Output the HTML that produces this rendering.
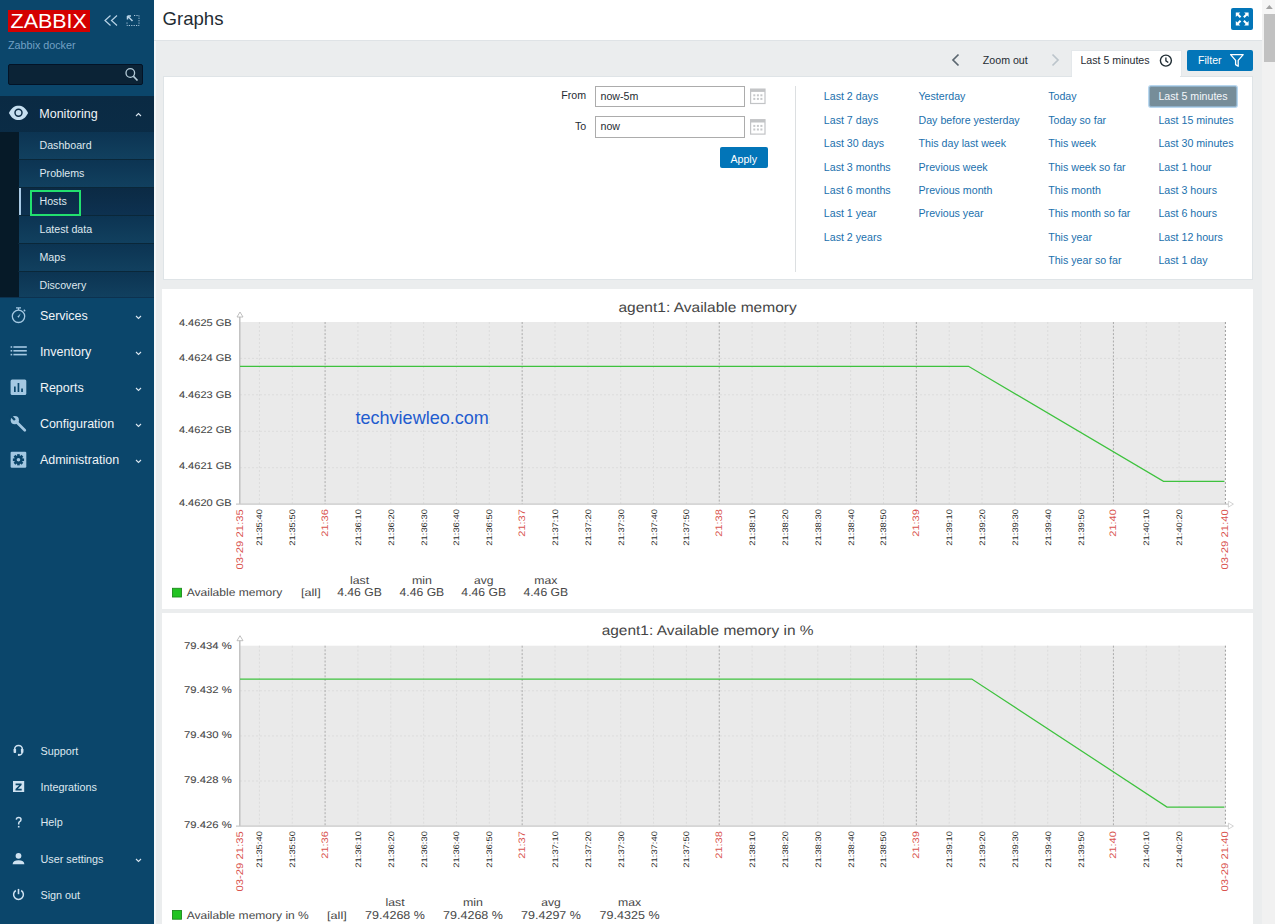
<!DOCTYPE html>
<html><head><meta charset="utf-8">
<style>
*{box-sizing:border-box;margin:0;padding:0}
html,body{width:1275px;height:924px;overflow:hidden;background:#ebedee;font-family:"Liberation Sans",sans-serif;color:#1f2c33}
.abs{position:absolute}
#sb{position:absolute;left:0;top:0;width:154px;height:924px;background:#0b466b}
.t{position:absolute;white-space:nowrap;line-height:1}
.mi{font-size:12.5px;color:#f0f4f7}
.si{font-size:10.65px;color:#dfe8ef}
.bi{font-size:10.8px;color:#dfe8ef}
.lnk{font-size:10.65px;color:#1a70ad}
.si-bg{left:18.5px;width:135.5px;height:26.8px;background:linear-gradient(#0c3452,#11405f)}
.sep{position:absolute;left:18px;width:136px;height:1.4px;background:#0a2739}
</style></head>
<body>
<div id="sb">
  <!-- logo -->
  <div class="abs" style="left:8px;top:10px;width:82px;height:22px;background:#d40000"></div>
  <svg class="abs" style="left:0;top:0" width="154" height="60">
    <text x="10.6" y="28.2" font-size="21" fill="#fff" textLength="76.2" lengthAdjust="spacingAndGlyphs" font-family="Liberation Sans">ZABBIX</text>
    <path d="M110.5,15.5 L105,20.5 L110.5,25.5 M117,15.5 L111.5,20.5 L117,25.5" fill="none" stroke="#b9d3e6" stroke-width="1.2"/>
    <path d="M127.5,16 L131,16 M127.5,16 L127.5,19.5 M127.8,16.3 L132.5,21" stroke="#b9d3e6" stroke-width="1.5" fill="none"/>
    <path d="M134,15.5 H139 V25.5 H127 V21.5" stroke="#b9d3e6" stroke-width="0.9" fill="none" stroke-dasharray="1.2,1.2"/>
  </svg>
  <div class="t" style="left:8px;top:40.2px;font-size:10.75px;color:#72a0c4">Zabbix docker</div>
  <!-- search -->
  <div class="abs" style="left:8px;top:64px;width:135px;height:20.5px;background:#0b2336;border:1px solid #031326;border-radius:2px"></div>
  <svg class="abs" style="left:123px;top:66px" width="18" height="18">
    <circle cx="7.3" cy="7" r="4.3" fill="none" stroke="#b4cbd8" stroke-width="1.3"/>
    <path d="M10.3,10.1 L14.5,14.5" stroke="#b4cbd8" stroke-width="1.6"/>
  </svg>
  <!-- monitoring expanded -->
  <div class="abs" style="left:0;top:96px;width:154px;height:201.5px;background:linear-gradient(#0a2a43,#0c3250)"></div>
  <div class="abs" style="left:0;top:131.8px;width:18.5px;height:165.7px;background:#061a28"></div>
  <div class="abs" style="left:18.5px;top:131.8px;width:135.5px;height:165.7px;background:#0f3a58"></div>
  <div class="abs si-bg" style="top:131.8px"></div><div class="abs si-bg" style="top:160.4px"></div><div class="abs si-bg" style="top:188.35px;background:linear-gradient(#0b2a44,#0d3150)"></div><div class="abs si-bg" style="top:216.3px"></div><div class="abs si-bg" style="top:244.25px"></div><div class="abs si-bg" style="top:272.2px;height:25.3px"></div>
  <div class="sep" style="top:159px"></div>
  <div class="sep" style="top:186.95px"></div>
  <div class="sep" style="top:214.9px"></div>
  <div class="sep" style="top:242.85px"></div>
  <div class="sep" style="top:270.8px"></div>
  <div class="abs" style="left:19px;top:188.3px;width:2px;height:26.5px;background:#a9cbe6"></div>
  <div class="abs" style="left:29.8px;top:190px;width:51.4px;height:26px;border:2px solid #22e06e"></div>
  <svg class="abs" style="left:0;top:96px" width="154" height="36">
    <path d="M8.9,16.9 C11.8,11.6 14.8,9.8 18.5,9.8 C22.2,9.8 25.2,11.6 28.1,16.9 C25.2,22.3 22.2,24.1 18.5,24.1 C14.8,24.1 11.8,22.3 8.9,16.9 Z" fill="#c6dff0"/>
    <circle cx="18.5" cy="16.8" r="3.5" fill="none" stroke="#0b2a43" stroke-width="1.45"/>
    <path d="M136,20 L138.5,17.5 L141,20" fill="none" stroke="#d8e5ef" stroke-width="1.1"/>
  </svg>
  <div class="t mi" style="left:39.3px;top:108.2px">Monitoring</div>
  <div class="t si" style="left:39.5px;top:140px">Dashboard</div>
  <div class="t si" style="left:39.5px;top:167.8px">Problems</div>
  <div class="t si" style="left:39.5px;top:195.6px">Hosts</div>
  <div class="t si" style="left:39.5px;top:224.4px">Latest data</div>
  <div class="t si" style="left:39.5px;top:252.4px">Maps</div>
  <div class="t si" style="left:39.5px;top:280.2px">Discovery</div>
  <!-- main menu -->
  <div class="t mi" style="left:39.9px;top:309.8px">Services</div>
  <div class="t mi" style="left:39.9px;top:345.8px">Inventory</div>
  <div class="t mi" style="left:39.9px;top:381.8px">Reports</div>
  <div class="t mi" style="left:39.9px;top:417.8px">Configuration</div>
  <div class="t mi" style="left:39.9px;top:453.8px">Administration</div>
  <svg class="abs" style="left:0;top:297px" width="154" height="180">
    <!-- chevrons -->
    <path d="M136,19 L138.5,21.5 L141,19 M136,55 L138.5,57.5 L141,55 M136,91 L138.5,93.5 L141,91 M136,127 L138.5,129.5 L141,127 M136,163 L138.5,165.5 L141,163" fill="none" stroke="#d8e5ef" stroke-width="1.1"/>
    <!-- services stopwatch -->
    <g fill="none" stroke="#a4c8e2" stroke-width="1.3">
      <circle cx="18.5" cy="19.3" r="6.2"/>
      <path d="M16,10.8 H21 M18.5,10.8 V13 M23.8,12.8 L25.2,14.2"/>
    </g>
    <path d="M20.8,16.3 L17.3,19.8 L18.8,20.8 Z" fill="#a4c8e2"/>
    <!-- inventory -->
    <g fill="#a4c8e2">
      <rect x="10.6" y="49.2" width="1.6" height="1.6"/><rect x="10.6" y="53" width="1.6" height="1.6"/><rect x="10.6" y="56.8" width="1.6" height="1.6"/>
      <rect x="13.4" y="49.2" width="13.4" height="1.6"/><rect x="13.4" y="53" width="13.4" height="1.6"/><rect x="13.4" y="56.8" width="13.4" height="1.6"/>
    </g>
    <!-- reports -->
    <rect x="10.6" y="82.5" width="15.7" height="15.5" rx="1.5" fill="#a4c8e2"/>
    <g fill="#0b466b"><rect x="14" y="89.5" width="1.7" height="5.5"/><rect x="17.6" y="86" width="1.7" height="9"/><rect x="21.2" y="91.5" width="1.7" height="3.5"/></g>
    <!-- configuration wrench -->
    <circle cx="14.8" cy="123.2" r="4.1" fill="#a4c8e2"/>
    <path d="M15.5,124 L24.8,133.2" stroke="#a4c8e2" stroke-width="2.7" stroke-linecap="round"/>
    <path d="M14.9,123 L10.3,118.4" stroke="#0b466b" stroke-width="2.4"/>
    <!-- administration gear -->
    <rect x="10.6" y="154.8" width="15.7" height="15.9" rx="1.2" fill="#a4c8e2"/>
    <g transform="translate(18.45,162.75)">
      <circle r="4.2" fill="#0b466b"/>
      <g fill="#0b466b"><rect x="-1.3" y="-5.6" width="2.6" height="11.2"/><rect x="-1.3" y="-5.6" width="2.6" height="11.2" transform="rotate(45)"/><rect x="-1.3" y="-5.6" width="2.6" height="11.2" transform="rotate(90)"/><rect x="-1.3" y="-5.6" width="2.6" height="11.2" transform="rotate(135)"/></g>
      <circle r="1.8" fill="#a4c8e2"/>
    </g>
  </svg>
  <!-- bottom menu -->
  <div class="t bi" style="left:40.5px;top:746px">Support</div>
  <div class="t bi" style="left:40.5px;top:781.8px">Integrations</div>
  <div class="t bi" style="left:40.5px;top:817.4px">Help</div>
  <div class="t bi" style="left:40.5px;top:854px">User settings</div>
  <div class="t bi" style="left:40.5px;top:890px">Sign out</div>
  <svg class="abs" style="left:0;top:730px" width="154" height="194">
    <!-- support headset -->
    <path d="M14.6,21.5 V19.4 A3.9,3.9 0 0 1 22.4,19.4 V21.5" fill="none" stroke="#cfe2f1" stroke-width="1.5"/>
    <rect x="13.6" y="18.8" width="2.5" height="4.3" rx="0.8" fill="#cfe2f1"/><rect x="20.9" y="18.8" width="2.5" height="4.3" rx="0.8" fill="#cfe2f1"/>
    <path d="M22.2,22.6 Q21.9,24.9 19.4,24.9" fill="none" stroke="#cfe2f1" stroke-width="1.2"/>
    <circle cx="18.9" cy="24.9" r="1.1" fill="#cfe2f1"/>
    <!-- integrations -->
    <rect x="13" y="51" width="11.2" height="11" fill="#cfe2f1"/>
    <path d="M15.6,53.4 H21.6 V55 L17.9,58.8 H21.7 V60.6 H15.5 V59 L19.2,55.2 H15.6 Z" fill="#0b466b"/>
    <!-- help -->
    <path d="M16.3,89.6 Q16.4,87.4 18.7,87.4 Q21,87.4 21,89.4 Q21,90.8 19.6,91.7 Q18.7,92.3 18.7,93.6 V94.4" fill="none" stroke="#cfe2f1" stroke-width="1.5"/><rect x="17.9" y="95.9" width="1.6" height="1.6" fill="#cfe2f1"/>
    <!-- user -->
    <circle cx="18.5" cy="125.8" r="2.9" fill="#cfe2f1"/>
    <path d="M12.6,134.2 Q12.8,130.3 18.5,130.3 Q24.2,130.3 24.4,134.2 Z" fill="#cfe2f1"/>
    <path d="M136,129 L138.5,131.5 L141,129" fill="none" stroke="#d8e5ef" stroke-width="1.1"/>
    <!-- sign out -->
    <path d="M15.8,160.5 A4.9,4.9 0 1 0 21.2,160.5" fill="none" stroke="#cfe2f1" stroke-width="1.5"/>
    <path d="M18.5,158.9 V164.2" stroke="#cfe2f1" stroke-width="1.6"/>
  </svg>
</div>

<!-- header -->
<div class="abs" style="left:154px;top:0;width:1.5px;height:924px;background:#f6f8f9"></div>
<div class="abs" style="left:154px;top:0;width:1108px;height:40px;background:#fff"></div>
<div class="abs" style="left:154px;top:40px;width:1108px;height:1px;background:#dfe3e6"></div>
<div class="t" style="left:162.5px;top:10px;font-size:18.6px;color:#1f2c33">Graphs</div>
<div class="abs" style="left:1231.3px;top:8px;width:21.4px;height:22px;background:#0275b8;border-radius:2px"></div>
<svg class="abs" style="left:1225px;top:0" width="37" height="40">
  <g fill="#fff">
    <path d="M10.8,12.6 H15.3 L13.8,14.1 L16.3,16.6 L14.8,18.1 L12.3,15.6 L10.8,17.1 Z"/>
    <path d="M23.6,12.6 H19.1 L20.6,14.1 L18.1,16.6 L19.6,18.1 L22.1,15.6 L23.6,17.1 Z"/>
    <path d="M10.8,25.5 H15.3 L13.8,24 L16.3,21.5 L14.8,20 L12.3,22.5 L10.8,21 Z"/>
    <path d="M23.6,25.5 H19.1 L20.6,24 L18.1,21.5 L19.6,20 L22.1,22.5 L23.6,21 Z"/>
  </g>
</svg>

<!-- tabs -->
<svg class="abs" style="left:940px;top:40px" width="125" height="36">
  <path d="M18.5,14.5 L13,20 L18.5,25.5" fill="none" stroke="#5b6770" stroke-width="1.7"/>
  <path d="M112.5,14.5 L118,20 L112.5,25.5" fill="none" stroke="#bcc5cb" stroke-width="1.7"/>
</svg>
<div class="t" style="left:982.8px;top:55px;font-size:10.65px;color:#1f2c33">Zoom out</div>
<div class="abs" style="left:1071px;top:50.2px;width:111px;height:27px;background:#fff;border:1px solid #e4e8eb;border-bottom:none"></div>
<div class="t" style="left:1080.4px;top:55.1px;font-size:10.65px;color:#1f2c33">Last 5 minutes</div>
<svg class="abs" style="left:1158px;top:53px" width="16" height="16">
  <circle cx="7.9" cy="7.6" r="5.5" fill="none" stroke="#1f2c33" stroke-width="1.4"/>
  <path d="M7.9,4.5 V7.8 L10.3,9.6" fill="none" stroke="#1f2c33" stroke-width="1.3"/>
</svg>
<div class="abs" style="left:1187px;top:50.2px;width:66px;height:20.4px;background:#0275b8;border-radius:2px"></div>
<div class="t" style="left:1198px;top:55.1px;font-size:10.65px;color:#fff">Filter</div>
<svg class="abs" style="left:1228px;top:52px" width="18" height="18">
  <path d="M2.6,2.6 H15.2 L10.2,8.4 V14.3 L7.6,12.6 V8.4 Z" fill="none" stroke="#fff" stroke-width="1.3" stroke-linejoin="round"/>
</svg>

<!-- filter box -->
<div class="abs" style="left:162.5px;top:76.4px;width:1090px;height:204px;background:#fff;border:1px solid #dfe4e7"></div>
<div class="abs" style="left:1072px;top:76px;width:108px;height:2px;background:#fff"></div>
<div class="t" style="left:561.2px;top:90.3px;font-size:10.65px;color:#1f2c33">From</div>
<div class="t" style="left:574.9px;top:121px;font-size:10.65px;color:#1f2c33">To</div>
<div class="abs" style="left:595.1px;top:86.3px;width:149.7px;height:20.4px;border:1px solid #acacac;background:#fff"></div>
<div class="abs" style="left:595.1px;top:116.4px;width:149.7px;height:21.3px;border:1px solid #acacac;background:#fff"></div>
<div class="t" style="left:600.5px;top:91.1px;font-size:10.65px;color:#1f2c33">now-5m</div>
<div class="t" style="left:600.5px;top:121.4px;font-size:10.65px;color:#1f2c33">now</div>
<svg class="abs" style="left:748px;top:86px" width="20" height="52">
  <g>
    <rect x="2.6" y="3.1" width="14.4" height="14.4" fill="none" stroke="#c2c4c6" stroke-width="1.2"/>
    <rect x="2.6" y="3.1" width="14.4" height="2.8" fill="#c2c4c6"/>
    <g fill="#c6c8ca"><rect x="5.3" y="8.3" width="2" height="2"/><rect x="8.9" y="8.3" width="2" height="2"/><rect x="12.4" y="8.3" width="2" height="2"/><rect x="5.3" y="11.9" width="2" height="2"/><rect x="8.9" y="11.9" width="2" height="2"/><rect x="12.4" y="11.9" width="2" height="2"/></g>
  </g>
  <g transform="translate(0,30.6)">
    <rect x="2.6" y="3.1" width="14.4" height="14.4" fill="none" stroke="#c2c4c6" stroke-width="1.2"/>
    <rect x="2.6" y="3.1" width="14.4" height="2.8" fill="#c2c4c6"/>
    <g fill="#c6c8ca"><rect x="5.3" y="8.3" width="2" height="2"/><rect x="8.9" y="8.3" width="2" height="2"/><rect x="12.4" y="8.3" width="2" height="2"/><rect x="5.3" y="11.9" width="2" height="2"/><rect x="8.9" y="11.9" width="2" height="2"/><rect x="12.4" y="11.9" width="2" height="2"/></g>
  </g>
</svg>
<div class="abs" style="left:720px;top:147.1px;width:48px;height:21px;background:#0275b8;border-radius:2px"></div>
<div class="t" style="left:730.4px;top:154px;font-size:10.65px;color:#fff">Apply</div>
<div class="abs" style="left:795px;top:85.7px;width:1px;height:186px;background:#dcdfe1"></div>

<div class="t lnk" style="left:823.8px;top:91.3px">Last 2 days</div>
<div class="t lnk" style="left:823.8px;top:114.7px">Last 7 days</div>
<div class="t lnk" style="left:823.8px;top:138.1px">Last 30 days</div>
<div class="t lnk" style="left:823.8px;top:161.5px">Last 3 months</div>
<div class="t lnk" style="left:823.8px;top:184.9px">Last 6 months</div>
<div class="t lnk" style="left:823.8px;top:208.3px">Last 1 year</div>
<div class="t lnk" style="left:823.8px;top:231.7px">Last 2 years</div>

<div class="t lnk" style="left:918.5px;top:91.3px">Yesterday</div>
<div class="t lnk" style="left:918.5px;top:114.7px">Day before yesterday</div>
<div class="t lnk" style="left:918.5px;top:138.1px">This day last week</div>
<div class="t lnk" style="left:918.5px;top:161.5px">Previous week</div>
<div class="t lnk" style="left:918.5px;top:184.9px">Previous month</div>
<div class="t lnk" style="left:918.5px;top:208.3px">Previous year</div>

<div class="t lnk" style="left:1048.2px;top:91.3px">Today</div>
<div class="t lnk" style="left:1048.2px;top:114.7px">Today so far</div>
<div class="t lnk" style="left:1048.2px;top:138.1px">This week</div>
<div class="t lnk" style="left:1048.2px;top:161.5px">This week so far</div>
<div class="t lnk" style="left:1048.2px;top:184.9px">This month</div>
<div class="t lnk" style="left:1048.2px;top:208.3px">This month so far</div>
<div class="t lnk" style="left:1048.2px;top:231.7px">This year</div>
<div class="t lnk" style="left:1048.2px;top:255.1px">This year so far</div>

<div class="abs" style="left:1148.7px;top:86px;width:88.2px;height:20.7px;background:#768d99;border:1px solid #8fb0c8;box-shadow:0 0 0 1px #b9d7ee;border-radius:2px"></div>
<div class="t lnk" style="left:1158.4px;top:91.3px;color:#f4f7f9">Last 5 minutes</div>
<div class="t lnk" style="left:1158.4px;top:114.7px">Last 15 minutes</div>
<div class="t lnk" style="left:1158.4px;top:138.1px">Last 30 minutes</div>
<div class="t lnk" style="left:1158.4px;top:161.5px">Last 1 hour</div>
<div class="t lnk" style="left:1158.4px;top:184.9px">Last 3 hours</div>
<div class="t lnk" style="left:1158.4px;top:208.3px">Last 6 hours</div>
<div class="t lnk" style="left:1158.4px;top:231.7px">Last 12 hours</div>
<div class="t lnk" style="left:1158.4px;top:255.1px">Last 1 day</div>

<!-- graph containers -->
<div class="abs" style="left:162px;top:289.4px;width:1090.8px;height:319.5px;background:#fff"></div>
<div class="abs" style="left:162px;top:612.8px;width:1090.8px;height:320px;background:#fff"></div>
<svg class="gsvg" width="1275" height="924" viewBox="0 0 1275 924" style="position:absolute;left:0;top:0;font-family:'Liberation Sans',sans-serif;text-rendering:geometricPrecision">
<text x="707.60" y="312.00" font-size="13.88" fill="#454545" text-anchor="middle" textLength="178.23" lengthAdjust="spacingAndGlyphs">agent1: Available memory</text>
<rect x="240.0" y="322.0" width="985.4000000000001" height="182.10000000000002" fill="#eaeaea"/>
<line x1="240.0" y1="358.42" x2="1225.4" y2="358.42" stroke="#dcdcdc" stroke-width="1" stroke-dasharray="2,2"/>
<line x1="240.0" y1="394.84" x2="1225.4" y2="394.84" stroke="#dcdcdc" stroke-width="1" stroke-dasharray="2,2"/>
<line x1="240.0" y1="431.26" x2="1225.4" y2="431.26" stroke="#dcdcdc" stroke-width="1" stroke-dasharray="2,2"/>
<line x1="240.0" y1="467.68" x2="1225.4" y2="467.68" stroke="#dcdcdc" stroke-width="1" stroke-dasharray="2,2"/>
<line x1="259.40" y1="322.0" x2="259.40" y2="504.1" stroke="#dcdcdc" stroke-width="1" stroke-dasharray="2,2"/>
<line x1="292.25" y1="322.0" x2="292.25" y2="504.1" stroke="#dcdcdc" stroke-width="1" stroke-dasharray="2,2"/>
<line x1="325.09" y1="322.0" x2="325.09" y2="504.1" stroke="#ababab" stroke-width="1" stroke-dasharray="2,1.7"/>
<line x1="357.94" y1="322.0" x2="357.94" y2="504.1" stroke="#dcdcdc" stroke-width="1" stroke-dasharray="2,2"/>
<line x1="390.79" y1="322.0" x2="390.79" y2="504.1" stroke="#dcdcdc" stroke-width="1" stroke-dasharray="2,2"/>
<line x1="423.63" y1="322.0" x2="423.63" y2="504.1" stroke="#dcdcdc" stroke-width="1" stroke-dasharray="2,2"/>
<line x1="456.48" y1="322.0" x2="456.48" y2="504.1" stroke="#dcdcdc" stroke-width="1" stroke-dasharray="2,2"/>
<line x1="489.33" y1="322.0" x2="489.33" y2="504.1" stroke="#dcdcdc" stroke-width="1" stroke-dasharray="2,2"/>
<line x1="522.17" y1="322.0" x2="522.17" y2="504.1" stroke="#ababab" stroke-width="1" stroke-dasharray="2,1.7"/>
<line x1="555.02" y1="322.0" x2="555.02" y2="504.1" stroke="#dcdcdc" stroke-width="1" stroke-dasharray="2,2"/>
<line x1="587.87" y1="322.0" x2="587.87" y2="504.1" stroke="#dcdcdc" stroke-width="1" stroke-dasharray="2,2"/>
<line x1="620.71" y1="322.0" x2="620.71" y2="504.1" stroke="#dcdcdc" stroke-width="1" stroke-dasharray="2,2"/>
<line x1="653.56" y1="322.0" x2="653.56" y2="504.1" stroke="#dcdcdc" stroke-width="1" stroke-dasharray="2,2"/>
<line x1="686.41" y1="322.0" x2="686.41" y2="504.1" stroke="#dcdcdc" stroke-width="1" stroke-dasharray="2,2"/>
<line x1="719.25" y1="322.0" x2="719.25" y2="504.1" stroke="#ababab" stroke-width="1" stroke-dasharray="2,1.7"/>
<line x1="752.10" y1="322.0" x2="752.10" y2="504.1" stroke="#dcdcdc" stroke-width="1" stroke-dasharray="2,2"/>
<line x1="784.95" y1="322.0" x2="784.95" y2="504.1" stroke="#dcdcdc" stroke-width="1" stroke-dasharray="2,2"/>
<line x1="817.79" y1="322.0" x2="817.79" y2="504.1" stroke="#dcdcdc" stroke-width="1" stroke-dasharray="2,2"/>
<line x1="850.64" y1="322.0" x2="850.64" y2="504.1" stroke="#dcdcdc" stroke-width="1" stroke-dasharray="2,2"/>
<line x1="883.49" y1="322.0" x2="883.49" y2="504.1" stroke="#dcdcdc" stroke-width="1" stroke-dasharray="2,2"/>
<line x1="916.33" y1="322.0" x2="916.33" y2="504.1" stroke="#ababab" stroke-width="1" stroke-dasharray="2,1.7"/>
<line x1="949.18" y1="322.0" x2="949.18" y2="504.1" stroke="#dcdcdc" stroke-width="1" stroke-dasharray="2,2"/>
<line x1="982.03" y1="322.0" x2="982.03" y2="504.1" stroke="#dcdcdc" stroke-width="1" stroke-dasharray="2,2"/>
<line x1="1014.87" y1="322.0" x2="1014.87" y2="504.1" stroke="#dcdcdc" stroke-width="1" stroke-dasharray="2,2"/>
<line x1="1047.72" y1="322.0" x2="1047.72" y2="504.1" stroke="#dcdcdc" stroke-width="1" stroke-dasharray="2,2"/>
<line x1="1080.57" y1="322.0" x2="1080.57" y2="504.1" stroke="#dcdcdc" stroke-width="1" stroke-dasharray="2,2"/>
<line x1="1113.41" y1="322.0" x2="1113.41" y2="504.1" stroke="#ababab" stroke-width="1" stroke-dasharray="2,1.7"/>
<line x1="1146.26" y1="322.0" x2="1146.26" y2="504.1" stroke="#dcdcdc" stroke-width="1" stroke-dasharray="2,2"/>
<line x1="1179.11" y1="322.0" x2="1179.11" y2="504.1" stroke="#dcdcdc" stroke-width="1" stroke-dasharray="2,2"/>
<line x1="1225.4" y1="322.0" x2="1225.4" y2="504.1" stroke="#9a9a9a" stroke-width="1" stroke-dasharray="2,2"/>
<line x1="239.8" y1="314.0" x2="239.8" y2="504.1" stroke="#bdbdbd" stroke-width="1.4"/>
<line x1="236.0" y1="504.1" x2="1229.4" y2="504.1" stroke="#c8c8c8" stroke-width="1.2"/>
<path d="M237.0,317.0 L240.0,312.0 L243.0,317.0 Z" fill="#fff" stroke="#b0b0b0" stroke-width="0.8"/>
<path d="M1228.4,501.1 L1233.4,504.1 L1228.4,507.1 Z" fill="#fff" stroke="#c8c8c8" stroke-width="0.8"/>
<text x="231.70" y="326.00" font-size="9.70" fill="#444444" stroke="#444444" stroke-width="0.08" text-anchor="end" textLength="52.78" lengthAdjust="spacingAndGlyphs">4.4625 GB</text>
<text x="231.70" y="361.30" font-size="9.70" fill="#444444" stroke="#444444" stroke-width="0.08" text-anchor="end" textLength="52.78" lengthAdjust="spacingAndGlyphs">4.4624 GB</text>
<text x="231.70" y="397.90" font-size="9.70" fill="#444444" stroke="#444444" stroke-width="0.08" text-anchor="end" textLength="52.78" lengthAdjust="spacingAndGlyphs">4.4623 GB</text>
<text x="231.70" y="433.20" font-size="9.70" fill="#444444" stroke="#444444" stroke-width="0.08" text-anchor="end" textLength="52.78" lengthAdjust="spacingAndGlyphs">4.4622 GB</text>
<text x="231.70" y="469.30" font-size="9.70" fill="#444444" stroke="#444444" stroke-width="0.08" text-anchor="end" textLength="52.78" lengthAdjust="spacingAndGlyphs">4.4621 GB</text>
<text x="231.70" y="505.70" font-size="9.70" fill="#444444" stroke="#444444" stroke-width="0.08" text-anchor="end" textLength="52.78" lengthAdjust="spacingAndGlyphs">4.4620 GB</text>
<polyline points="240.0,366.3 968.5,366.3 1163.5,481.3 1224.4,481.3" fill="none" stroke="#3ec23e" stroke-width="1.25"/>
<text transform="translate(243.00,509.1) rotate(-90)" x="0" y="0" font-size="9.59" fill="#d9534f" text-anchor="end" textLength="60.44" lengthAdjust="spacingAndGlyphs">03-29 21:35</text>
<text transform="translate(1228.40,509.1) rotate(-90)" x="0" y="0" font-size="9.59" fill="#d9534f" text-anchor="end" textLength="60.44" lengthAdjust="spacingAndGlyphs">03-29 21:40</text>
<text transform="translate(262.40,509.1) rotate(-90)" x="0" y="0" font-size="8.01" fill="#2e2e2e" text-anchor="end" textLength="36.60" lengthAdjust="spacingAndGlyphs">21:35:40</text>
<text transform="translate(295.25,509.1) rotate(-90)" x="0" y="0" font-size="8.01" fill="#2e2e2e" text-anchor="end" textLength="36.60" lengthAdjust="spacingAndGlyphs">21:35:50</text>
<text transform="translate(328.09,509.1) rotate(-90)" x="0" y="0" font-size="9.31" fill="#d9534f" text-anchor="end" textLength="27.67" lengthAdjust="spacingAndGlyphs">21:36</text>
<text transform="translate(360.94,509.1) rotate(-90)" x="0" y="0" font-size="8.01" fill="#2e2e2e" text-anchor="end" textLength="36.60" lengthAdjust="spacingAndGlyphs">21:36:10</text>
<text transform="translate(393.79,509.1) rotate(-90)" x="0" y="0" font-size="8.01" fill="#2e2e2e" text-anchor="end" textLength="36.60" lengthAdjust="spacingAndGlyphs">21:36:20</text>
<text transform="translate(426.63,509.1) rotate(-90)" x="0" y="0" font-size="8.01" fill="#2e2e2e" text-anchor="end" textLength="36.60" lengthAdjust="spacingAndGlyphs">21:36:30</text>
<text transform="translate(459.48,509.1) rotate(-90)" x="0" y="0" font-size="8.01" fill="#2e2e2e" text-anchor="end" textLength="36.60" lengthAdjust="spacingAndGlyphs">21:36:40</text>
<text transform="translate(492.33,509.1) rotate(-90)" x="0" y="0" font-size="8.01" fill="#2e2e2e" text-anchor="end" textLength="36.60" lengthAdjust="spacingAndGlyphs">21:36:50</text>
<text transform="translate(525.17,509.1) rotate(-90)" x="0" y="0" font-size="9.31" fill="#d9534f" text-anchor="end" textLength="27.67" lengthAdjust="spacingAndGlyphs">21:37</text>
<text transform="translate(558.02,509.1) rotate(-90)" x="0" y="0" font-size="8.01" fill="#2e2e2e" text-anchor="end" textLength="36.60" lengthAdjust="spacingAndGlyphs">21:37:10</text>
<text transform="translate(590.87,509.1) rotate(-90)" x="0" y="0" font-size="8.01" fill="#2e2e2e" text-anchor="end" textLength="36.60" lengthAdjust="spacingAndGlyphs">21:37:20</text>
<text transform="translate(623.71,509.1) rotate(-90)" x="0" y="0" font-size="8.01" fill="#2e2e2e" text-anchor="end" textLength="36.60" lengthAdjust="spacingAndGlyphs">21:37:30</text>
<text transform="translate(656.56,509.1) rotate(-90)" x="0" y="0" font-size="8.01" fill="#2e2e2e" text-anchor="end" textLength="36.60" lengthAdjust="spacingAndGlyphs">21:37:40</text>
<text transform="translate(689.41,509.1) rotate(-90)" x="0" y="0" font-size="8.01" fill="#2e2e2e" text-anchor="end" textLength="36.60" lengthAdjust="spacingAndGlyphs">21:37:50</text>
<text transform="translate(722.25,509.1) rotate(-90)" x="0" y="0" font-size="9.31" fill="#d9534f" text-anchor="end" textLength="27.67" lengthAdjust="spacingAndGlyphs">21:38</text>
<text transform="translate(755.10,509.1) rotate(-90)" x="0" y="0" font-size="8.01" fill="#2e2e2e" text-anchor="end" textLength="36.60" lengthAdjust="spacingAndGlyphs">21:38:10</text>
<text transform="translate(787.95,509.1) rotate(-90)" x="0" y="0" font-size="8.01" fill="#2e2e2e" text-anchor="end" textLength="36.60" lengthAdjust="spacingAndGlyphs">21:38:20</text>
<text transform="translate(820.79,509.1) rotate(-90)" x="0" y="0" font-size="8.01" fill="#2e2e2e" text-anchor="end" textLength="36.60" lengthAdjust="spacingAndGlyphs">21:38:30</text>
<text transform="translate(853.64,509.1) rotate(-90)" x="0" y="0" font-size="8.01" fill="#2e2e2e" text-anchor="end" textLength="36.60" lengthAdjust="spacingAndGlyphs">21:38:40</text>
<text transform="translate(886.49,509.1) rotate(-90)" x="0" y="0" font-size="8.01" fill="#2e2e2e" text-anchor="end" textLength="36.60" lengthAdjust="spacingAndGlyphs">21:38:50</text>
<text transform="translate(919.33,509.1) rotate(-90)" x="0" y="0" font-size="9.31" fill="#d9534f" text-anchor="end" textLength="27.67" lengthAdjust="spacingAndGlyphs">21:39</text>
<text transform="translate(952.18,509.1) rotate(-90)" x="0" y="0" font-size="8.01" fill="#2e2e2e" text-anchor="end" textLength="36.60" lengthAdjust="spacingAndGlyphs">21:39:10</text>
<text transform="translate(985.03,509.1) rotate(-90)" x="0" y="0" font-size="8.01" fill="#2e2e2e" text-anchor="end" textLength="36.60" lengthAdjust="spacingAndGlyphs">21:39:20</text>
<text transform="translate(1017.87,509.1) rotate(-90)" x="0" y="0" font-size="8.01" fill="#2e2e2e" text-anchor="end" textLength="36.60" lengthAdjust="spacingAndGlyphs">21:39:30</text>
<text transform="translate(1050.72,509.1) rotate(-90)" x="0" y="0" font-size="8.01" fill="#2e2e2e" text-anchor="end" textLength="36.60" lengthAdjust="spacingAndGlyphs">21:39:40</text>
<text transform="translate(1083.57,509.1) rotate(-90)" x="0" y="0" font-size="8.01" fill="#2e2e2e" text-anchor="end" textLength="36.60" lengthAdjust="spacingAndGlyphs">21:39:50</text>
<text transform="translate(1116.41,509.1) rotate(-90)" x="0" y="0" font-size="9.31" fill="#d9534f" text-anchor="end" textLength="27.67" lengthAdjust="spacingAndGlyphs">21:40</text>
<text transform="translate(1149.26,509.1) rotate(-90)" x="0" y="0" font-size="8.01" fill="#2e2e2e" text-anchor="end" textLength="36.60" lengthAdjust="spacingAndGlyphs">21:40:10</text>
<text transform="translate(1182.11,509.1) rotate(-90)" x="0" y="0" font-size="8.01" fill="#2e2e2e" text-anchor="end" textLength="36.60" lengthAdjust="spacingAndGlyphs">21:40:20</text>
<rect x="172.5" y="588.3" width="9" height="8.7" fill="#22c322" stroke="#1c8a1c" stroke-width="0.9"/>
<text x="186.70" y="596.40" font-size="10.92" fill="#474747" text-anchor="start" textLength="95.64" lengthAdjust="spacingAndGlyphs">Available memory</text>
<text x="300.90" y="596.40" font-size="10.45" fill="#474747" text-anchor="start" textLength="19.78" lengthAdjust="spacingAndGlyphs">[all]</text>
<text x="359.50" y="583.50" font-size="10.92" fill="#474747" text-anchor="middle" textLength="19.12" lengthAdjust="spacingAndGlyphs">last</text>
<text x="359.50" y="596.40" font-size="11.51" fill="#474747" text-anchor="middle" textLength="44.66" lengthAdjust="spacingAndGlyphs">4.46 GB</text>
<text x="421.90" y="583.50" font-size="10.92" fill="#474747" text-anchor="middle" textLength="19.99" lengthAdjust="spacingAndGlyphs">min</text>
<text x="421.90" y="596.40" font-size="11.51" fill="#474747" text-anchor="middle" textLength="44.66" lengthAdjust="spacingAndGlyphs">4.46 GB</text>
<text x="483.70" y="583.50" font-size="10.92" fill="#474747" text-anchor="middle" textLength="19.50" lengthAdjust="spacingAndGlyphs">avg</text>
<text x="483.70" y="596.40" font-size="11.51" fill="#474747" text-anchor="middle" textLength="44.66" lengthAdjust="spacingAndGlyphs">4.46 GB</text>
<text x="545.80" y="583.50" font-size="10.92" fill="#474747" text-anchor="middle" textLength="23.09" lengthAdjust="spacingAndGlyphs">max</text>
<text x="545.80" y="596.40" font-size="11.51" fill="#474747" text-anchor="middle" textLength="44.66" lengthAdjust="spacingAndGlyphs">4.46 GB</text>
<text x="707.60" y="634.90" font-size="13.88" fill="#454545" text-anchor="middle" textLength="211.95" lengthAdjust="spacingAndGlyphs">agent1: Available memory in %</text>
<rect x="240.0" y="645.7" width="985.4000000000001" height="180.39999999999998" fill="#eaeaea"/>
<line x1="240.0" y1="690.80" x2="1225.4" y2="690.80" stroke="#dcdcdc" stroke-width="1" stroke-dasharray="2,2"/>
<line x1="240.0" y1="735.90" x2="1225.4" y2="735.90" stroke="#dcdcdc" stroke-width="1" stroke-dasharray="2,2"/>
<line x1="240.0" y1="781.00" x2="1225.4" y2="781.00" stroke="#dcdcdc" stroke-width="1" stroke-dasharray="2,2"/>
<line x1="259.40" y1="645.7" x2="259.40" y2="826.1" stroke="#dcdcdc" stroke-width="1" stroke-dasharray="2,2"/>
<line x1="292.25" y1="645.7" x2="292.25" y2="826.1" stroke="#dcdcdc" stroke-width="1" stroke-dasharray="2,2"/>
<line x1="325.09" y1="645.7" x2="325.09" y2="826.1" stroke="#ababab" stroke-width="1" stroke-dasharray="2,1.7"/>
<line x1="357.94" y1="645.7" x2="357.94" y2="826.1" stroke="#dcdcdc" stroke-width="1" stroke-dasharray="2,2"/>
<line x1="390.79" y1="645.7" x2="390.79" y2="826.1" stroke="#dcdcdc" stroke-width="1" stroke-dasharray="2,2"/>
<line x1="423.63" y1="645.7" x2="423.63" y2="826.1" stroke="#dcdcdc" stroke-width="1" stroke-dasharray="2,2"/>
<line x1="456.48" y1="645.7" x2="456.48" y2="826.1" stroke="#dcdcdc" stroke-width="1" stroke-dasharray="2,2"/>
<line x1="489.33" y1="645.7" x2="489.33" y2="826.1" stroke="#dcdcdc" stroke-width="1" stroke-dasharray="2,2"/>
<line x1="522.17" y1="645.7" x2="522.17" y2="826.1" stroke="#ababab" stroke-width="1" stroke-dasharray="2,1.7"/>
<line x1="555.02" y1="645.7" x2="555.02" y2="826.1" stroke="#dcdcdc" stroke-width="1" stroke-dasharray="2,2"/>
<line x1="587.87" y1="645.7" x2="587.87" y2="826.1" stroke="#dcdcdc" stroke-width="1" stroke-dasharray="2,2"/>
<line x1="620.71" y1="645.7" x2="620.71" y2="826.1" stroke="#dcdcdc" stroke-width="1" stroke-dasharray="2,2"/>
<line x1="653.56" y1="645.7" x2="653.56" y2="826.1" stroke="#dcdcdc" stroke-width="1" stroke-dasharray="2,2"/>
<line x1="686.41" y1="645.7" x2="686.41" y2="826.1" stroke="#dcdcdc" stroke-width="1" stroke-dasharray="2,2"/>
<line x1="719.25" y1="645.7" x2="719.25" y2="826.1" stroke="#ababab" stroke-width="1" stroke-dasharray="2,1.7"/>
<line x1="752.10" y1="645.7" x2="752.10" y2="826.1" stroke="#dcdcdc" stroke-width="1" stroke-dasharray="2,2"/>
<line x1="784.95" y1="645.7" x2="784.95" y2="826.1" stroke="#dcdcdc" stroke-width="1" stroke-dasharray="2,2"/>
<line x1="817.79" y1="645.7" x2="817.79" y2="826.1" stroke="#dcdcdc" stroke-width="1" stroke-dasharray="2,2"/>
<line x1="850.64" y1="645.7" x2="850.64" y2="826.1" stroke="#dcdcdc" stroke-width="1" stroke-dasharray="2,2"/>
<line x1="883.49" y1="645.7" x2="883.49" y2="826.1" stroke="#dcdcdc" stroke-width="1" stroke-dasharray="2,2"/>
<line x1="916.33" y1="645.7" x2="916.33" y2="826.1" stroke="#ababab" stroke-width="1" stroke-dasharray="2,1.7"/>
<line x1="949.18" y1="645.7" x2="949.18" y2="826.1" stroke="#dcdcdc" stroke-width="1" stroke-dasharray="2,2"/>
<line x1="982.03" y1="645.7" x2="982.03" y2="826.1" stroke="#dcdcdc" stroke-width="1" stroke-dasharray="2,2"/>
<line x1="1014.87" y1="645.7" x2="1014.87" y2="826.1" stroke="#dcdcdc" stroke-width="1" stroke-dasharray="2,2"/>
<line x1="1047.72" y1="645.7" x2="1047.72" y2="826.1" stroke="#dcdcdc" stroke-width="1" stroke-dasharray="2,2"/>
<line x1="1080.57" y1="645.7" x2="1080.57" y2="826.1" stroke="#dcdcdc" stroke-width="1" stroke-dasharray="2,2"/>
<line x1="1113.41" y1="645.7" x2="1113.41" y2="826.1" stroke="#ababab" stroke-width="1" stroke-dasharray="2,1.7"/>
<line x1="1146.26" y1="645.7" x2="1146.26" y2="826.1" stroke="#dcdcdc" stroke-width="1" stroke-dasharray="2,2"/>
<line x1="1179.11" y1="645.7" x2="1179.11" y2="826.1" stroke="#dcdcdc" stroke-width="1" stroke-dasharray="2,2"/>
<line x1="1225.4" y1="645.7" x2="1225.4" y2="826.1" stroke="#9a9a9a" stroke-width="1" stroke-dasharray="2,2"/>
<line x1="239.8" y1="637.7" x2="239.8" y2="826.1" stroke="#bdbdbd" stroke-width="1.4"/>
<line x1="236.0" y1="826.1" x2="1229.4" y2="826.1" stroke="#c8c8c8" stroke-width="1.2"/>
<path d="M237.0,640.7 L240.0,635.7 L243.0,640.7 Z" fill="#fff" stroke="#b0b0b0" stroke-width="0.8"/>
<path d="M1228.4,823.1 L1233.4,826.1 L1228.4,829.1 Z" fill="#fff" stroke="#c8c8c8" stroke-width="0.8"/>
<text x="231.70" y="649.00" font-size="9.70" fill="#444444" stroke="#444444" stroke-width="0.08" text-anchor="end" textLength="47.67" lengthAdjust="spacingAndGlyphs">79.434 %</text>
<text x="231.70" y="693.30" font-size="9.70" fill="#444444" stroke="#444444" stroke-width="0.08" text-anchor="end" textLength="47.67" lengthAdjust="spacingAndGlyphs">79.432 %</text>
<text x="231.70" y="738.00" font-size="9.70" fill="#444444" stroke="#444444" stroke-width="0.08" text-anchor="end" textLength="47.67" lengthAdjust="spacingAndGlyphs">79.430 %</text>
<text x="231.70" y="782.80" font-size="9.70" fill="#444444" stroke="#444444" stroke-width="0.08" text-anchor="end" textLength="47.67" lengthAdjust="spacingAndGlyphs">79.428 %</text>
<text x="231.70" y="827.50" font-size="9.70" fill="#444444" stroke="#444444" stroke-width="0.08" text-anchor="end" textLength="47.67" lengthAdjust="spacingAndGlyphs">79.426 %</text>
<polyline points="240.0,679.0 971.8,679.0 1167.0,807.0 1224.4,807.0" fill="none" stroke="#3ec23e" stroke-width="1.25"/>
<text transform="translate(243.00,831.1) rotate(-90)" x="0" y="0" font-size="9.59" fill="#d9534f" text-anchor="end" textLength="60.44" lengthAdjust="spacingAndGlyphs">03-29 21:35</text>
<text transform="translate(1228.40,831.1) rotate(-90)" x="0" y="0" font-size="9.59" fill="#d9534f" text-anchor="end" textLength="60.44" lengthAdjust="spacingAndGlyphs">03-29 21:40</text>
<text transform="translate(262.40,831.1) rotate(-90)" x="0" y="0" font-size="8.01" fill="#2e2e2e" text-anchor="end" textLength="36.60" lengthAdjust="spacingAndGlyphs">21:35:40</text>
<text transform="translate(295.25,831.1) rotate(-90)" x="0" y="0" font-size="8.01" fill="#2e2e2e" text-anchor="end" textLength="36.60" lengthAdjust="spacingAndGlyphs">21:35:50</text>
<text transform="translate(328.09,831.1) rotate(-90)" x="0" y="0" font-size="9.31" fill="#d9534f" text-anchor="end" textLength="27.67" lengthAdjust="spacingAndGlyphs">21:36</text>
<text transform="translate(360.94,831.1) rotate(-90)" x="0" y="0" font-size="8.01" fill="#2e2e2e" text-anchor="end" textLength="36.60" lengthAdjust="spacingAndGlyphs">21:36:10</text>
<text transform="translate(393.79,831.1) rotate(-90)" x="0" y="0" font-size="8.01" fill="#2e2e2e" text-anchor="end" textLength="36.60" lengthAdjust="spacingAndGlyphs">21:36:20</text>
<text transform="translate(426.63,831.1) rotate(-90)" x="0" y="0" font-size="8.01" fill="#2e2e2e" text-anchor="end" textLength="36.60" lengthAdjust="spacingAndGlyphs">21:36:30</text>
<text transform="translate(459.48,831.1) rotate(-90)" x="0" y="0" font-size="8.01" fill="#2e2e2e" text-anchor="end" textLength="36.60" lengthAdjust="spacingAndGlyphs">21:36:40</text>
<text transform="translate(492.33,831.1) rotate(-90)" x="0" y="0" font-size="8.01" fill="#2e2e2e" text-anchor="end" textLength="36.60" lengthAdjust="spacingAndGlyphs">21:36:50</text>
<text transform="translate(525.17,831.1) rotate(-90)" x="0" y="0" font-size="9.31" fill="#d9534f" text-anchor="end" textLength="27.67" lengthAdjust="spacingAndGlyphs">21:37</text>
<text transform="translate(558.02,831.1) rotate(-90)" x="0" y="0" font-size="8.01" fill="#2e2e2e" text-anchor="end" textLength="36.60" lengthAdjust="spacingAndGlyphs">21:37:10</text>
<text transform="translate(590.87,831.1) rotate(-90)" x="0" y="0" font-size="8.01" fill="#2e2e2e" text-anchor="end" textLength="36.60" lengthAdjust="spacingAndGlyphs">21:37:20</text>
<text transform="translate(623.71,831.1) rotate(-90)" x="0" y="0" font-size="8.01" fill="#2e2e2e" text-anchor="end" textLength="36.60" lengthAdjust="spacingAndGlyphs">21:37:30</text>
<text transform="translate(656.56,831.1) rotate(-90)" x="0" y="0" font-size="8.01" fill="#2e2e2e" text-anchor="end" textLength="36.60" lengthAdjust="spacingAndGlyphs">21:37:40</text>
<text transform="translate(689.41,831.1) rotate(-90)" x="0" y="0" font-size="8.01" fill="#2e2e2e" text-anchor="end" textLength="36.60" lengthAdjust="spacingAndGlyphs">21:37:50</text>
<text transform="translate(722.25,831.1) rotate(-90)" x="0" y="0" font-size="9.31" fill="#d9534f" text-anchor="end" textLength="27.67" lengthAdjust="spacingAndGlyphs">21:38</text>
<text transform="translate(755.10,831.1) rotate(-90)" x="0" y="0" font-size="8.01" fill="#2e2e2e" text-anchor="end" textLength="36.60" lengthAdjust="spacingAndGlyphs">21:38:10</text>
<text transform="translate(787.95,831.1) rotate(-90)" x="0" y="0" font-size="8.01" fill="#2e2e2e" text-anchor="end" textLength="36.60" lengthAdjust="spacingAndGlyphs">21:38:20</text>
<text transform="translate(820.79,831.1) rotate(-90)" x="0" y="0" font-size="8.01" fill="#2e2e2e" text-anchor="end" textLength="36.60" lengthAdjust="spacingAndGlyphs">21:38:30</text>
<text transform="translate(853.64,831.1) rotate(-90)" x="0" y="0" font-size="8.01" fill="#2e2e2e" text-anchor="end" textLength="36.60" lengthAdjust="spacingAndGlyphs">21:38:40</text>
<text transform="translate(886.49,831.1) rotate(-90)" x="0" y="0" font-size="8.01" fill="#2e2e2e" text-anchor="end" textLength="36.60" lengthAdjust="spacingAndGlyphs">21:38:50</text>
<text transform="translate(919.33,831.1) rotate(-90)" x="0" y="0" font-size="9.31" fill="#d9534f" text-anchor="end" textLength="27.67" lengthAdjust="spacingAndGlyphs">21:39</text>
<text transform="translate(952.18,831.1) rotate(-90)" x="0" y="0" font-size="8.01" fill="#2e2e2e" text-anchor="end" textLength="36.60" lengthAdjust="spacingAndGlyphs">21:39:10</text>
<text transform="translate(985.03,831.1) rotate(-90)" x="0" y="0" font-size="8.01" fill="#2e2e2e" text-anchor="end" textLength="36.60" lengthAdjust="spacingAndGlyphs">21:39:20</text>
<text transform="translate(1017.87,831.1) rotate(-90)" x="0" y="0" font-size="8.01" fill="#2e2e2e" text-anchor="end" textLength="36.60" lengthAdjust="spacingAndGlyphs">21:39:30</text>
<text transform="translate(1050.72,831.1) rotate(-90)" x="0" y="0" font-size="8.01" fill="#2e2e2e" text-anchor="end" textLength="36.60" lengthAdjust="spacingAndGlyphs">21:39:40</text>
<text transform="translate(1083.57,831.1) rotate(-90)" x="0" y="0" font-size="8.01" fill="#2e2e2e" text-anchor="end" textLength="36.60" lengthAdjust="spacingAndGlyphs">21:39:50</text>
<text transform="translate(1116.41,831.1) rotate(-90)" x="0" y="0" font-size="9.31" fill="#d9534f" text-anchor="end" textLength="27.67" lengthAdjust="spacingAndGlyphs">21:40</text>
<text transform="translate(1149.26,831.1) rotate(-90)" x="0" y="0" font-size="8.01" fill="#2e2e2e" text-anchor="end" textLength="36.60" lengthAdjust="spacingAndGlyphs">21:40:10</text>
<text transform="translate(1182.11,831.1) rotate(-90)" x="0" y="0" font-size="8.01" fill="#2e2e2e" text-anchor="end" textLength="36.60" lengthAdjust="spacingAndGlyphs">21:40:20</text>
<rect x="172.5" y="910.5" width="9" height="8.7" fill="#22c322" stroke="#1c8a1c" stroke-width="0.9"/>
<text x="186.70" y="918.60" font-size="10.92" fill="#474747" text-anchor="start" textLength="122.11" lengthAdjust="spacingAndGlyphs">Available memory in %</text>
<text x="327.00" y="918.60" font-size="10.45" fill="#474747" text-anchor="start" textLength="19.78" lengthAdjust="spacingAndGlyphs">[all]</text>
<text x="395.00" y="905.70" font-size="10.92" fill="#474747" text-anchor="middle" textLength="19.12" lengthAdjust="spacingAndGlyphs">last</text>
<text x="395.00" y="918.60" font-size="11.43" fill="#474747" text-anchor="middle" textLength="59.98" lengthAdjust="spacingAndGlyphs">79.4268 %</text>
<text x="473.00" y="905.70" font-size="10.92" fill="#474747" text-anchor="middle" textLength="19.99" lengthAdjust="spacingAndGlyphs">min</text>
<text x="473.00" y="918.60" font-size="11.43" fill="#474747" text-anchor="middle" textLength="59.98" lengthAdjust="spacingAndGlyphs">79.4268 %</text>
<text x="551.00" y="905.70" font-size="10.92" fill="#474747" text-anchor="middle" textLength="19.50" lengthAdjust="spacingAndGlyphs">avg</text>
<text x="551.00" y="918.60" font-size="11.43" fill="#474747" text-anchor="middle" textLength="59.98" lengthAdjust="spacingAndGlyphs">79.4297 %</text>
<text x="629.60" y="905.70" font-size="10.92" fill="#474747" text-anchor="middle" textLength="23.09" lengthAdjust="spacingAndGlyphs">max</text>
<text x="629.60" y="918.60" font-size="11.43" fill="#474747" text-anchor="middle" textLength="59.98" lengthAdjust="spacingAndGlyphs">79.4325 %</text>
</svg>
<div class="t" style="left:355.5px;top:409px;font-size:18.05px;color:#1f5ccf">techviewleo.com</div>

<!-- scrollbar -->
<div class="abs" style="left:1262px;top:0;width:13px;height:924px;background:#f1f1f1"></div>
<div class="abs" style="left:1262px;top:0;width:13px;height:14px;background:#f6f6f6"></div>
<div class="abs" style="left:1264.2px;top:14.3px;width:10.8px;height:48px;background:#c1c1c1"></div>
<svg class="abs" style="left:1262px;top:0" width="13" height="14">
  <path d="M3.9,8.9 L7.4,5 L10.8,8.9 Z" fill="#a3a3a3"/>
</svg>
</body></html>
